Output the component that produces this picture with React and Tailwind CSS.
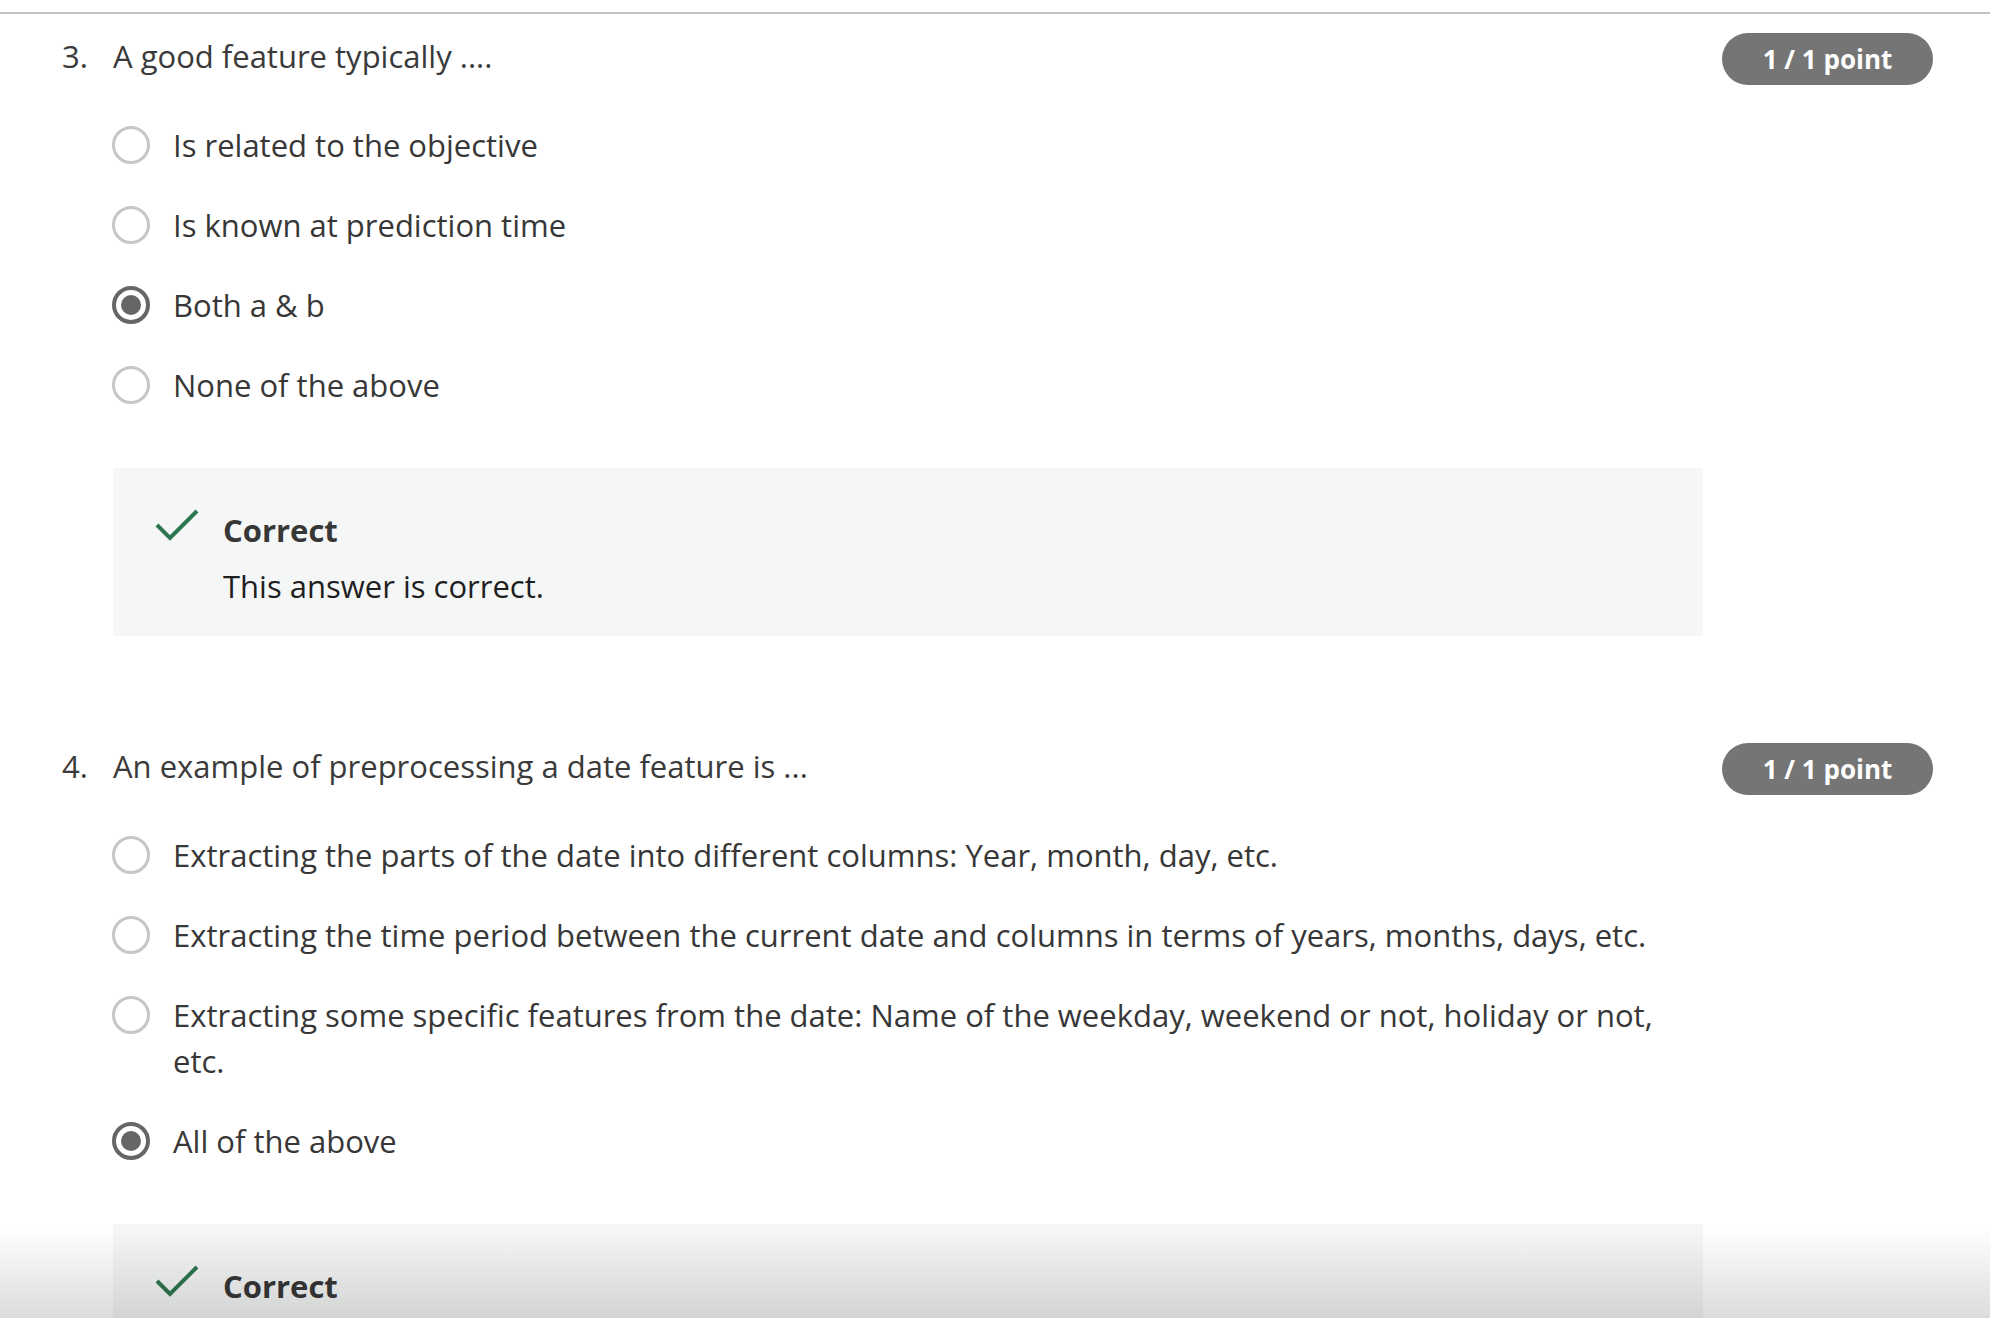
import React from 'react'

const questions = [
  {
    num: '3.',
    text: 'A good feature typically ....',
    points: '1 / 1 point',
    options: [
      'Is related to the objective',
      'Is known at prediction time',
      'Both a & b',
      'None of the above',
    ],
    selected: 2,
    feedback: 'This answer is correct.',
  },
  {
    num: '4.',
    text: 'An example of preprocessing a date feature is ...',
    points: '1 / 1 point',
    options: [
      'Extracting the parts of the date into different columns: Year, month, day, etc.',
      'Extracting the time period between the current date and columns in terms of years, months, days, etc.',
      'Extracting some specific features from the date: Name of the weekday, weekend or not, holiday or not, etc.',
      'All of the above',
    ],
    selected: 3,
    feedback: 'This answer is correct.',
  },
]

function Radio({ checked }) {
  if (checked) {
    return (
      <span className="mt-[4px] flex h-[38px] w-[38px] shrink-0 items-center justify-center rounded-full border-[4px] border-[#666666]">
        <span className="h-[20px] w-[20px] rounded-full bg-[#666666]" />
      </span>
    )
  }
  return <span className="mt-[4px] h-[38px] w-[38px] shrink-0 rounded-full border-[3px] border-[#c6c6c6]" />
}

function Question({ q }) {
  return (
    <section>
      <div className="flex items-start justify-between pr-[57px]">
        <div className="flex pl-[62px] text-[31px] leading-[46px] text-[#3a3a3a]">
          <span className="w-[51px]">{q.num}</span>
          <span>{q.text}</span>
        </div>
        <div className="flex h-[52px] w-[211px] items-center justify-center rounded-full bg-[#757575] text-[26px] font-bold text-white">
          {q.points}
        </div>
      </div>

      <div className="mt-[37px] flex flex-col gap-[34px] pl-[112px]">
        {q.options.map((opt, i) => (
          <label key={i} className="flex items-start gap-[23px]">
            <Radio checked={i === q.selected} />
            <span className="max-w-[1500px] text-[31px] leading-[46px] text-[#373737]">{opt}</span>
          </label>
        ))}
      </div>

      <div className="ml-[113px] mt-[60px] flex w-[1590px] items-start gap-[24px] bg-[#f5f7f7] pb-[27px] pl-[42px] pt-[39px]">
        <svg width="44" height="34" viewBox="0 0 44 34" className="mt-[1px] shrink-0">
          <polyline points="2,17 15,30 42,3" fill="none" stroke="#2e7651" strokeWidth="4" />
        </svg>
        <div>
          <div className="text-[31px] font-bold leading-[46px] text-[#373737]">Correct</div>
          <div className="mt-[10px] text-[31px] leading-[46px] text-[#1f1f1f]">{q.feedback}</div>
        </div>
      </div>
    </section>
  )
}

export default function App() {
  return (
    <div className="relative h-[1318px] overflow-hidden bg-white font-['Open_Sans',sans-serif]">
      <div className="mt-[12px] h-[2px] bg-[#c2c2c2]" />
      <div className="mt-[19px] flex flex-col gap-[107px]">
        {questions.map(q => (
          <Question key={q.num} q={q} />
        ))}
      </div>
      <div className="pointer-events-none absolute inset-x-0 bottom-0 h-[90px] bg-gradient-to-b from-black/0 to-black/[0.14]" />
    </div>
  )
}
